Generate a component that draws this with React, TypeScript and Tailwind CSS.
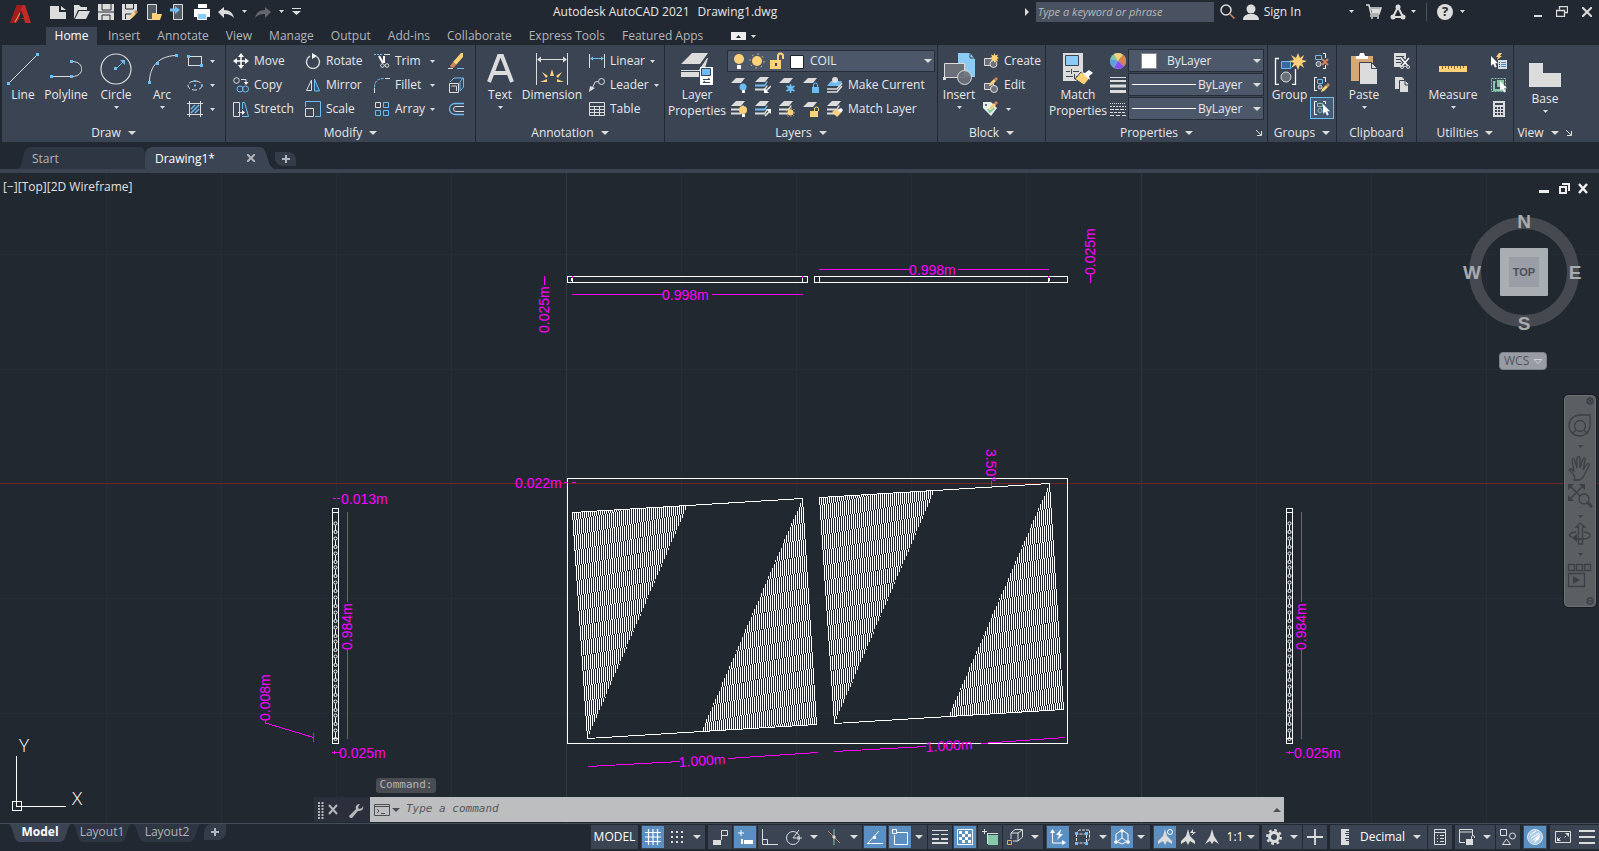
import type { ReactNode } from "react";
import clsx from "clsx";

const W = "#dcdcdc";
const B = "#6cbcf5";
const Y = "#ffd27a";
const O = "#d2835a";
const G = "#86c8a8";
const M = "#ff00ff";

interface IconProps {
  size?: number;
  children: ReactNode;
}

function Icon({ size = 16, children }: IconProps) {
  return (
    <svg width={size} height={size} viewBox={`0 0 ${size} ${size}`} fill="none" stroke={W} className="shrink-0" aria-hidden="true">
      {children}
    </svg>
  );
}

function Caret({ big = false }: { big?: boolean }) {
  return big ? (
    <svg width="8" height="4" viewBox="0 0 8 4" className="shrink-0" aria-hidden="true"><path d="M0 0h8L4 4z" fill={W} /></svg>
  ) : (
    <svg width="5" height="3" viewBox="0 0 5 3" className="shrink-0" aria-hidden="true"><path d="M0 0h5L2.500 3z" fill={W} /></svg>
  );
}

/* ---------- small shared drawings ---------- */

const sheets = (x = 0, y = 0, c2 = W) => (
  <g transform={`translate(${x} ${y})`} stroke="none">
    <path d="M5 0h9l-4 5H0z" fill={W} />
    <path d="M0 7.500h9.500l2-3h1.500l-3 5H0z" fill={c2} />
    <path d="M0 11.500h9.500l2-3h1.500l-3 5H0z" fill={W} />
  </g>
);
const sheet = <path d="M5 1h9l-4 5H0z" fill={W} stroke="none" />;
const pencil = (x: number, y: number) => (
  <g transform={`translate(${x} ${y})`} stroke="none">
    <path d="M0 9l1-3 4-4 2 2-4 4z" fill={Y} />
    <path d="M5 2l2-2 2 2-2 2z" fill={O} />
  </g>
);
const cursor = (x: number, y: number) => (
  <path transform={`translate(${x} ${y})`} d="M0 0v10l2.200-2.200L4 11.500l1.800-.8-1.600-3.500H7z" fill="#fff" stroke="none" />
);
const brush = (x: number, y: number) => (
  <g transform={`translate(${x} ${y})`} stroke="none">
    <path d="M0 3l4-3 5 4-4 4z" fill={Y} />
    <path d="M5 1l4-2 2 2-2 3z" fill="#fff" />
  </g>
);

const icons: Record<string, ReactNode> = {
  rect: <Icon><rect x="1.500" y="3.500" width="13" height="9" /><path d="M0 2h3v3H0zM13 11h3v3h-3z" fill={B} stroke="none" /></Icon>,
  ellipse: <Icon><ellipse cx="8" cy="8.500" rx="7" ry="4.500" strokeDasharray="5 2" /><path d="M7 3h2v2H7zM7 7.500h2v2H7zM14 7.500h2v2h-2z" fill={B} stroke="none" /></Icon>,
  hatch: <Icon><path d="M0 2.500h16M0 13.500h16M2.500 0v16M13.500 0v16" /><path d="M4 8l4-4M4 12l8-8M8 12l4-4" stroke={B} strokeWidth="1.500" /></Icon>,
  move: <Icon><path d="M8 2v12M2 8h12" stroke="#fff" strokeWidth="1.500" /><path d="M8 0l3 4H5zM8 16l3-4H5zM0 8l4-3v6zM16 8l-4-3v6z" fill="#fff" stroke="none" /></Icon>,
  copy: <Icon><circle cx="3.500" cy="3.500" r="2.800" /><path d="M8 2.500h5v3" /><path d="M11 5h4.500L13 8z" fill="#fff" stroke="none" /><circle cx="7" cy="12" r="3" stroke={B} /><circle cx="12.500" cy="12" r="3" stroke={B} /></Icon>,
  stretch: <Icon><path d="M.5 1.500h6v14h-6zM5 11.500h5" /><path d="M9 9l3 2.500L9 14z" fill="#fff" stroke="none" /><path d="M9.500 8V1.500h2l4 14H9" stroke={B} /></Icon>,
  rotate: <Icon><path d="M5 3.200A6.500 6.500 0 1 0 11.500 3.500" strokeWidth="1.400" /><path d="M7 0l5 3-5 3z" fill="#fff" stroke="none" /></Icon>,
  mirror: <Icon><path d="M6.500 3v10.500h-5z" /><path d="M9.500 2v12h5z" stroke={B} fill="#35597a" /></Icon>,
  scale: <Icon><path d="M.5 6V.5h15v15H10" stroke={B} /><path d="M.5 7.500h8v8h-8z" /></Icon>,
  trim: <Icon><path d="M0 1.500h8" stroke={B} strokeDasharray="2 1" /><path d="M10 1.500h6" /><path d="M5 3l4 7M10 3v7" stroke="#fff" strokeWidth="2" /><circle cx="8.500" cy="12.500" r="1.800" /><circle cx="13" cy="12.500" r="1.800" /></Icon>,
  fillet: <Icon><path d="M.5 10.500c0-6 3-9 9-9" stroke={B} strokeDasharray="3 1" /><path d="M11 1.500h5M.5 11v5" /></Icon>,
  array: <Icon><path d="M1.500 1.500h5v5h-5z" /><path d="M9.500 1.500h5v5h-5zM1.500 9.500h5v5h-5zM9.500 9.500h5v5h-5z" stroke={B} /></Icon>,
  erase: <Icon><path d="M0 15.500h5" /><path d="M9 15.500h7" stroke={B} /><path d="M15 0v4l-7 8-3-3 8-9z" fill={Y} stroke="none" /><path d="M5 9l3 3-2 2.500H3L2 13z" fill={O} stroke="none" /></Icon>,
  explode: <Icon><path d="M1.500 6.500h9v9h-9zM3.500 9h5v5" /><path d="M2 5l4-4h9.500v9l-3.500 4M12 5l3-4M12 5v8" stroke={B} /></Icon>,
  offset: <Icon><path d="M16 2.500H7a5.500 5.500 0 0 0 0 11h9" stroke={B} strokeWidth="1.300" /><path d="M16 5.500H8a2.500 2.500 0 0 0 0 5h8" /></Icon>,
  linear: <Icon><path d="M.5 1v14M15.500 1v14" /><path d="M3 5.500h10" stroke={B} /><path d="M1 5.500l3-2v4zM15 5.500l-3-2v4z" fill={B} stroke="none" /></Icon>,
  leader: <Icon><circle cx="12.500" cy="4.500" r="3" /><path d="M9.500 4.500L6 5l-3 7" /><path d="M0 15l1-6 5 2z" fill={W} stroke="none" /></Icon>,
  table: <Icon><path d="M.5 1.500h15v13H.5zM.5 5.500h15M.5 8.500h15M.5 11.500h15M5.500 5v10M10.500 5v10" /></Icon>,
  layOff: <Icon>{sheet}<circle cx="12" cy="10" r="3.500" fill={B} stroke="none" /><path d="M11 13h3v3h-3z" fill="#fff" stroke="none" /></Icon>,
  layIso: <Icon>{sheets(0, 0, B)}<path d="M16 9l-5 5" stroke="#fff" strokeWidth="1.500" /><path d="M9 16v-5l5 5z" fill="#fff" stroke="none" /></Icon>,
  layFrz: <Icon>{sheet}<path d="M11.500 7v9M7.500 9l8 5M15.500 9l-8 5" stroke={B} strokeWidth="1.500" /><circle cx="11.500" cy="11.500" r="2.500" stroke={B} /></Icon>,
  layLck: <Icon>{sheet}<path d="M9 10h7v6H9z" fill={B} stroke="none" /><path d="M10.500 10V8a2 2 0 0 1 4 0v2" stroke={B} /></Icon>,
  layCur: <Icon><path d="M4 4h11l-3 5H0z" fill={B} stroke="none" /><circle cx="8" cy="3" r="3" fill={W} stroke="none" /><path d="M0 12h10l5-6M0 15h10l5-6" strokeWidth="1.500" /></Icon>,
  layOn: <Icon>{sheets()}<circle cx="12" cy="9" r="4" fill={Y} stroke="none" /><path d="M11 13h3v3h-3z" fill="#fff" stroke="none" /></Icon>,
  layUniso: <Icon>{sheets(0, 0, B)}<path d="M10 15l5-5" stroke="#fff" strokeWidth="1.500" /><path d="M16 8v5l-5-5z" fill="#fff" stroke="none" /></Icon>,
  layThw: <Icon>{sheets()}<circle cx="11.500" cy="11.500" r="3" fill={Y} stroke="none" /><circle cx="11.500" cy="11.500" r="4.500" stroke={Y} strokeDasharray="1 2" /></Icon>,
  layUlk: <Icon>{sheet}<path d="M7 10h8v6H7z" fill={Y} stroke="none" /><path d="M11.500 10V8a2 2 0 0 1 4 0v2" stroke={Y} /></Icon>,
  layMatch: <Icon>{sheets()}{brush(5, 8)}</Icon>,
  blkCreate: <Icon><path d="M1.500 5.500h9v7h-9z" fill="#6b7078" /><circle cx="10.500" cy="11" r="3.500" fill="#6b7078" /><path d="M11.500 0l1 2.500L15 1.500 14 4l2 1-2 1 1 2.500-2.500-1L11.500 10l-1-2.500L8 8.500 9 6 7 5l2-1-1-2.500 2.500 1z" fill={Y} stroke="none" /></Icon>,
  blkEdit: <Icon><path d="M1.500 6.500h9v6h-9z" fill="#6b7078" /><circle cx="11" cy="12" r="3.500" fill="#6b7078" />{pencil(6, 0)}</Icon>,
  blkAttr: <Icon><path d="M0 1h8l6 6-6 8-8-8z" fill="#e4efe8" stroke="none" /><circle cx="3" cy="4" r="1" fill="#3b4453" stroke="none" /><path d="M5 8l2 3 4-4" stroke={G} strokeWidth="2" />{pencil(6, 0)}</Icon>,
  wheel: <Icon><circle cx="8" cy="8" r="8" fill={G} stroke="none" /><path d="M8 8V0a8 8 0 0 1 5 2z" fill={Y} stroke="none" /><path d="M8 8l5-6.500a8 8 0 0 1 1 12z" fill={O} stroke="none" /><path d="M8 8l6 5.500a8 8 0 0 1-10 1z" fill="#8a4dff" stroke="none" /><path d="M8 8L3 14.200A8 8 0 0 1 .3 6z" fill="#5d9fe0" stroke="none" /><path d="M8 8L4 1a8 8 0 0 1 4-1z" fill={Y} stroke="none" /></Icon>,
  lweight: <Icon><path d="M0 .5h16" /><path d="M0 4h16" strokeWidth="2" /><path d="M0 9h16" strokeWidth="3" /><path d="M0 14.500h16" strokeWidth="3" /></Icon>,
  ltype: <Icon><path d="M0 2.500h16" strokeDasharray="1 1" /><path d="M0 5.500h16" strokeDasharray="2 1" /><path d="M0 8.500h16" strokeDasharray="4 1" /><path d="M0 11.500h16" strokeDasharray="3 1" /><path d="M0 14.500h16" strokeDasharray="4 2" /></Icon>,
  ungroup: <Icon><path d="M1.500 2.500h6v4h-6z" stroke={B} /><circle cx="4.500" cy="11" r="2.500" fill="#6b7078" /><path d="M9 .5h2.500V5M9 15.500h2.500V12" stroke="#fff" /><path d="M8 6l6 6M14 6l-6 6" stroke={O} strokeWidth="2" /></Icon>,
  groupEdit: <Icon><path d="M3 .5H.5v13H3M9 .5h2.500V5" stroke="#fff" /><path d="M3.500 2.500h5v4h-5z" stroke={B} /><circle cx="6" cy="10" r="2" fill="#6b7078" />{pencil(7, 6)}</Icon>,
  groupSel: <Icon><path d="M3 1.500H.5v13H3M9 1.500h2.500V4" stroke="#fff" /><path d="M3.500 3.500h5v3h-5z" stroke={G} /><circle cx="6" cy="10.500" r="2" stroke={G} />{cursor(9, 4)}</Icon>,
  cut: <Icon><path d="M0 0h12v14H0z" fill={W} stroke="none" /><path d="M2 3.500h8M2 6.500h5M2 9.500h5" stroke="#3b4453" /><path d="M7 5l7 8M15 5l-7 8" stroke="#3b4453" strokeWidth="4" /><path d="M7 5l7 8M15 5l-7 8" stroke="#fff" strokeWidth="1.500" /><circle cx="8" cy="14" r="1.500" /><circle cx="14" cy="14" r="1.500" /></Icon>,
  copyClip: <Icon><path d="M1 0h7l2 2v10H1z" fill={W} stroke="none" /><path d="M5.500 3.500h6l3 3v9h-9z" fill={W} stroke="#3b4453" /><path d="M11 4v4h4" stroke="#3b4453" /></Icon>,
  qselect: <Icon>{cursor(0, 3)}<path d="M7 7h9v9H7z" fill={W} stroke="none" /><path d="M8 9.500h1M8 11.500h1M8 13.500h1" stroke="#445" /><path d="M10 9.500h5M10 11.500h5M10 13.500h5" stroke="#3c8bd0" /><path d="M8 0h3L9 3h2L6 7l1-3H5z" fill={Y} stroke="none" /></Icon>,
  selAll: <Icon><path d="M.5 1.500h14v13H.5z" stroke={G} strokeDasharray="2 1" /><path d="M6 3h7v7H6z" fill={G} stroke="none" /><path d="M4.500 5H3v8h8v-2" stroke={G} strokeWidth="2" />{cursor(9, 4)}</Icon>,
  calc: <Icon><path d="M2 0h12v16H2z" fill={W} stroke="none" /><path d="M4 2h8v2H4z" fill="#3b4453" stroke="none" /><path d="M4 7h8M4 10h8M4 13h8" stroke="#3b4453" strokeWidth="2" strokeDasharray="2 1" /></Icon>,
};

/* ---------- ribbon parts ---------- */

function Big({ label, icon, width, arrow = false }: { label: string[]; icon: ReactNode; width: string; arrow?: boolean }) {
  return (
    <button type="button" className={clsx("flex h-[74px] shrink-0 flex-col items-center", width)}>
      <span className="flex h-9 items-center pt-1">{icon}</span>
      <span className="mt-0.5 block text-center leading-4 whitespace-nowrap">
        {label.map((l) => <span key={l} className="block">{l}</span>)}
      </span>
      {arrow && <span className="flex h-2 items-center"><Caret /></span>}
    </button>
  );
}

function Small({ icon, label, arrow = false, width }: { icon: string; label?: string; arrow?: boolean; width?: string }) {
  return (
    <button type="button" aria-label={label ?? icon} className={clsx("flex h-6 shrink-0 items-center gap-[5px] whitespace-nowrap", width)}>
      {icons[icon]}
      {label && <span>{label}</span>}
      {arrow && <span className="ml-auto"><Caret /></span>}
    </button>
  );
}

function Panel({ title, width, children, arrow = true, launch, pad = "pl-[7px]" }: {
  title: string; width: string; children: ReactNode; arrow?: boolean; launch?: "corner" | "inline"; pad?: string;
}) {
  return (
    <section className={clsx("flex h-[97px] flex-col bg-[#3b4453] pt-1", width)}>
      <div className={clsx("flex h-[74px]", pad)}>{children}</div>
      <div className="relative flex h-[19px] items-center justify-center gap-[7px]">
        <h2>{title}</h2>
        {arrow && <Caret big />}
        {launch && (
          <svg width="6" height="6" viewBox="0 0 6 6" className={clsx("shrink-0", launch === "corner" && "absolute top-[7px] right-[5px]")} stroke={W} fill="none" aria-hidden="true"><path d="M0 0l5 5M5.500 1v4.500H1" /></svg>
        )}
      </div>
    </section>
  );
}

function Pick({ label, value, children, height }: { label: string; value: string; children: ReactNode; height: string }) {
  return (
    <div className={clsx("flex items-center border border-[#272d38] bg-[#4c586a] pr-[2px]", height)}>
      {children}
      <select aria-label={label} className="min-w-0 flex-1 appearance-none bg-transparent outline-none">
        <option>{value}</option>
      </select>
      <Caret big />
    </div>
  );
}

function Ribbon() {
  return (
    <div className="flex gap-px bg-[#222831] pl-[2px]">
      <Panel title="Draw" width="w-[223px]" pad="pl-px">
        <Big label={["Line"]} width="w-10" icon={<Icon size={32}><path d="M2 30L30 2" /><path d="M0 29h3v3H0zM29 0h3v3h-3z" fill={B} stroke="none" /></Icon>} />
        <Big label={["Polyline"]} width="w-[46px]" icon={<Icon size={32}><path d="M2 23.500h20M22 8.500c13 0 13 15 0 15" /><path d="M0 22h3v3H0zM20 22h3v3h-3zM20 7h3v3h-3z" fill={B} stroke="none" /></Icon>} />
        <Big arrow label={["Circle"]} width="w-[54px]" icon={<Icon size={32}><circle cx="16" cy="16" r="15" strokeWidth="1.200" /><path d="M16 16l7-7" stroke={B} /><path d="M25 7v5l-5-5zM14 14h3v3h-3z" fill={B} stroke="none" /></Icon>} />
        <Big arrow label={["Arc"]} width="w-[38px]" icon={<Icon size={32}><path d="M3.500 29C3.500 13 13 3.500 29 2.500" /><path d="M2 28h3v3H2zM10 9h3v3h-3zM29 1h3v3h-3z" fill={B} stroke="none" /></Icon>} />
        <div className="ml-[6px]">
          <Small icon="rect" arrow width="w-[28px]" />
          <Small icon="ellipse" arrow width="w-[28px]" />
          <Small icon="hatch" arrow width="w-[28px]" />
        </div>
      </Panel>
      <Panel title="Modify" width="w-[249px]">
        <div className="w-[72px]"><Small icon="move" label="Move" /><Small icon="copy" label="Copy" /><Small icon="stretch" label="Stretch" /></div>
        <div className="w-[69px]"><Small icon="rotate" label="Rotate" /><Small icon="mirror" label="Mirror" /><Small icon="scale" label="Scale" /></div>
        <div className="w-[74px]">
          <Small icon="trim" label="Trim" arrow width="w-[61px]" /><Small icon="fillet" label="Fillet" arrow width="w-[61px]" /><Small icon="array" label="Array" arrow width="w-[61px]" />
        </div>
        <div><Small icon="erase" /><Small icon="explode" /><Small icon="offset" /></div>
      </Panel>
      <Panel title="Annotation" width="w-[188px]" pad="pl-px">
        <Big arrow label={["Text"]} width="w-[46px]" icon={<Icon size={32}><path d="M5 29L15 3h3l10 26M9 20h15" strokeWidth="4" /></Icon>} />
        <Big label={["Dimension"]} width="w-[58px]" icon={<Icon size={32}><path d="M.5 0v32M31.500 0v32M2 6.500h28" /><path d="M1 6.500l4-3v6zM31 6.500l-4-3v6z" fill={W} stroke="none" /><path d="M16 16l2 7h-4zM6 19l6 4-2 2zM26 19l-6 4 2 2zM4 29l7-3v3zM28 29l-7-3v3z" fill={Y} stroke="none" /></Icon>} />
        <div className="ml-2">
          <Small icon="linear" label="Linear" arrow width="w-[66px]" /><Small icon="leader" label="Leader" arrow width="w-[69px]" /><Small icon="table" label="Table" />
        </div>
      </Panel>
      <Panel title="Layers" width="w-[272px]" pad="pl-[2px]">
        <Big label={["Layer", "Properties"]} width="w-[60px]" icon={<Icon size={32}><path d="M11 0h16l-8 11H0zM0 17h18l8-12h1l-3 10-5 3H0zM0 24h18v-5H0z" fill={W} stroke="none" /><path d="M19 14h13v18H19z" fill="#fff" stroke="none" /><path d="M20.500 15.500h9v7h-9z" fill={B} stroke="#3b4453" /><path d="M22 26.500h7M22 29.500h7M27 25l2 1.500M24 28l-2 1.500" stroke="#3b4453" /></Icon>} />
        <div className="w-[208px]">
          <Pick label="Layer" value="COIL" height="mt-px h-[22px] mb-px">
            <svg width="78" height="20" viewBox="0 0 78 20" fill="none" className="mr-1 shrink-0" aria-hidden="true">
              <circle cx="11" cy="8" r="5" fill={Y} /><path d="M9 14h4v4H9z" fill="#fff" />
              <circle cx="29" cy="10" r="5" fill={Y} /><circle cx="29" cy="10" r="7" stroke={Y} strokeDasharray="1.500 4" />
              <path d="M42 9h11v9H42z" fill={Y} /><path d="M50 9V5a2.500 2.500 0 0 1 5 0v3" stroke={Y} strokeWidth="2" /><path d="M47 12h2v3h-2z" fill="#3b4453" />
              <path d="M62.500 4.500h13v13h-13z" fill="#fff" stroke="#222" />
            </svg>
          </Pick>
          <div className="flex gap-2 pl-1"><Small icon="layOff" /><Small icon="layIso" /><Small icon="layFrz" /><Small icon="layLck" /><Small icon="layCur" label="Make Current" /></div>
          <div className="flex gap-2 pl-1"><Small icon="layOn" /><Small icon="layUniso" /><Small icon="layThw" /><Small icon="layUlk" /><Small icon="layMatch" label="Match Layer" /></div>
        </div>
      </Panel>
      <Panel title="Block" width="w-[107px]" pad="pl-px">
        <Big arrow label={["Insert"]} width="w-10" icon={<Icon size={32}><path d="M15 0h12l5 6v18H15z" fill="#8accf6" stroke="none" /><path d="M27 0v5h5" stroke="#3b4453" /><path d="M1.500 10.500h20v14h-20z" fill="#6b7078" /><circle cx="21.500" cy="24.500" r="7" fill="#6b7078" fillOpacity=".9" /><path d="M0 24h3v3H0z" fill={W} stroke="none" /></Icon>} />
        <div className="ml-1"><Small icon="blkCreate" label="Create" /><Small icon="blkEdit" label="Edit" /><Small icon="blkAttr" arrow width="w-[28px]" /></div>
      </Panel>
      <Panel title="Properties" width="w-[221px]" pad="pl-[2px]" launch="corner">
        <Big label={["Match", "Properties"]} width="w-[60px]" icon={<Icon size={32}><path d="M1 0h20v28H1z" fill={W} stroke="none" /><path d="M3.500 2.500h13v10h-13z" fill="#8accf6" stroke="#3b4453" /><path d="M4 18.500h4M11 18.500h6M4 23.500h7M14 23.500h3M9.500 16v5M12.500 21v5" stroke="#3b4453" /><path d="M13 26l6-7 9 6-6 7z" fill={Y} stroke="#3b4453" /><path d="M19 19l4 1 4-3 4 3-4 3 1 4z" fill="#fff" stroke="none" /></Icon>} />
        <div className="w-5 pl-[2px]"><Small icon="wheel" /><Small icon="lweight" /><Small icon="ltype" /></div>
        <div className="flex w-[136px] flex-col gap-px">
          <Pick label="Object color" value="ByLayer" height="h-[23px]"><span className="mr-[10px] ml-3 size-4 border border-[#888] bg-white" /></Pick>
          <Pick label="Lineweight" value="ByLayer" height="h-[23px]"><span className="mr-[2px] ml-[3px] h-px w-16 bg-white" /></Pick>
          <Pick label="Linetype" value="ByLayer" height="h-[23px]"><span className="mr-[2px] ml-[3px] h-px w-16 bg-white" /></Pick>
        </div>
      </Panel>
      <Panel title="Groups" width="w-[68px]" pad="pl-px">
        <Big label={["Group"]} width="w-[41px]" icon={<Icon size={32}><path d="M5 5.500H1.500v26H5M18 31.500h3.500V16" stroke="#fff" strokeWidth="1.300" /><path d="M7.500 8.500h9v7h-9z" fill="#42669c" stroke={B} /><circle cx="12" cy="24" r="5" fill="#6b7078" /><path d="M24 0l2 5 4-3-2 5 5 1-5 2 2 5-4-3-2 5-2-5-5 3 3-5-5-2 5-1-3-5 5 3z" fill={Y} stroke="none" /></Icon>} />
        <div className="flex flex-col items-center">
          <Small icon="ungroup" /><Small icon="groupEdit" />
          <span className="flex h-[22px] w-6 items-center justify-center border border-[#6cbcf5] bg-[#455a75]"><Small icon="groupSel" /></span>
        </div>
      </Panel>
      <Panel title="Clipboard" width="w-[79px]" arrow={false} pad="pl-px">
        <Big arrow label={["Paste"]} width="w-[52px]" icon={<Icon size={32}><path d="M3 3h22v25H3z" fill="#d8a873" stroke="none" /><path d="M8 3h3l1-3h4l1 3h3v3H8z" fill="#fff" stroke="none" /><path d="M11.500 9.500h12l6 6v16h-18z" fill={W} stroke="#3b4453" /><path d="M23.500 9.500v6h6" stroke="#3b4453" /></Icon>} />
        <div className="ml-1"><Small icon="cut" /><Small icon="copyClip" /></div>
      </Panel>
      <Panel title="Utilities" width="w-24" pad="pl-[2px]">
        <Big arrow label={["Measure"]} width="w-[68px]" icon={<Icon size={32}><path d="M2 13h28v6H2z" fill={Y} stroke="none" /><path d="M5.500 13v3M8.500 13v2M11.500 13v3M14.500 13v2M17.500 13v3M20.500 13v2M23.500 13v3M26.500 13v2" stroke="#8b6d2d" /></Icon>} />
        <div className="ml-1"><Small icon="qselect" /><Small icon="selAll" /><Small icon="calc" /></div>
      </Panel>
      <Panel title="View" width="min-w-0 flex-1 pr-6" pad="pl-[7px] pt-1" launch="inline">
        <Big arrow label={["Base"]} width="w-12" icon={<Icon size={32}><path d="M0 6h14v10h18v14H0z" fill={W} stroke="none" /></Icon>} />
      </Panel>
    </div>
  );
}

/* ---------- title bar ---------- */

function TitleBar() {
  return (
    <header className="flex h-[27px] items-center pb-1">
      <div className="flex w-[553px] shrink-0 items-center pl-[10px]">
        <svg width="22" height="20" viewBox="0 0 22 20" className="mt-1 mr-[18px]" aria-hidden="true"><path d="M7 1h8l6 18h-6l-1-4H9l-3 4H0z" fill="#c22a26" /><path d="M11 6l3 8-5 1z" fill="#222831" /><path d="M13 1l-9 18H0L7 1z" fill="#a31d1f" /><path d="M5 18l5-9" stroke="#e0a060" /></svg>
        <div className="flex items-center gap-2">
          <Icon><path d="M0 2h9v6h7v7H0z" fill={W} stroke="none" /><path d="M11 2l5 4h-5z" fill={W} stroke="none" /></Icon>
          <Icon><path d="M0 15V1h5l2 2h6v3H4z" fill={W} stroke="none" /><path d="M5 7h11l-4 8H1z" fill={W} stroke="none" /></Icon>
          <Icon><path d="M0 0h16v16H0z" fill={W} stroke="none" /><path d="M4 0v6h9V0M4 16v-5h8v5M0 8h16" stroke="#222831" /></Icon>
          <Icon><path d="M0 0h15v8l-7 8H0z" fill={W} stroke="none" /><path d="M3.500 0v5h8V0M3.500 15v-5h6" stroke="#222831" />{pencil(7, 6)}</Icon>
          <Icon><path d="M1.500.5h9v15h-9z" fill="#555b63" /><path d="M6 9h4l1 1h5l-2 6H6z" fill={Y} stroke="none" /></Icon>
          <Icon><path d="M3.500.5h9v15h-9z" fill="#555b63" /><path d="M0 6h6" stroke={B} strokeWidth="3" /><path d="M5 2l5 4-5 4z" fill={B} stroke="none" /></Icon>
          <Icon><path d="M4 0h9v4H4zM0 5h16v8H0z" fill="#fff" stroke="none" /><path d="M3.500 9.500h9v6h-9z" fill="#8accf6" stroke="#fff" /></Icon>
          <Icon><path d="M0 8l6-5v3c6 0 9 3 10 8-3-3-5-4-10-4v4z" fill={W} stroke="none" /></Icon>
          <Caret />
          <span className="flex opacity-35"><Icon><path d="M16 8l-6-5v3C4 6 1 9 0 14c3-3 5-4 10-4v4z" fill={W} stroke="none" /></Icon></span>
          <Caret />
          <svg width="9" height="7" viewBox="0 0 9 7" aria-hidden="true"><path d="M0 0h9v1H0zM0 3h9L4.500 7z" fill={W} /></svg>
        </div>
      </div>
      <h1 className="flex gap-2 whitespace-nowrap text-[#e6e6e6]"><span>Autodesk AutoCAD 2021</span><span>Drawing1.dwg</span></h1>
      <div className="ml-auto flex shrink-0 items-center">
        <svg width="4" height="8" viewBox="0 0 4 8" className="mr-[7px]" aria-hidden="true"><path d="M0 0l4 4-4 4z" fill={W} /></svg>
        <input aria-label="Search" placeholder="Type a keyword or phrase" className="h-5 w-[178px] bg-[#4a5262] px-[2px] text-[11px] italic outline-none placeholder:text-[#b4b8be]" />
        <span className="ml-[6px] flex"><Icon><circle cx="6" cy="6" r="5" strokeWidth="1.500" /><path d="M9.500 9.500l5 5" stroke={O} strokeWidth="1.500" /></Icon></span>
        <button type="button" className="ml-[7px] flex items-center gap-[5px] whitespace-nowrap">
          <Icon><circle cx="8" cy="5" r="4.500" fill={W} stroke="none" /><path d="M0 16c0-5 4-5 5-6h6c1 1 5 1 5 6z" fill={W} stroke="none" /></Icon>Sign In
        </button>
        <div className="ml-[48px] flex items-center">
          <Caret />
          <span className="ml-3 flex"><Icon><path d="M0 1h3l2 9h8l2-6H4" strokeWidth="1.500" /><path d="M5 5h9l-1 4H6z" fill={W} stroke="none" /><path d="M4 12h9M5 14h2M11 14h2" strokeWidth="1.500" /></Icon></span>
          <span className="ml-2 flex"><Icon><path d="M8 3L3 13h10z" strokeWidth="2" /><circle cx="8" cy="3" r="2.500" fill={W} stroke="none" /><circle cx="3" cy="13" r="2.500" fill={W} stroke="none" /><circle cx="13" cy="13" r="2.500" fill={W} stroke="none" /></Icon></span>
          <span className="ml-[5px]"><Caret /></span>
          <span className="mx-[10px] h-[18px] w-px bg-[#4a5262]" />
          <span className="flex size-4 items-center justify-center rounded-full bg-[#dcdcdc] text-[13px] font-bold text-[#222831]">?</span>
          <span className="ml-[7px]"><Caret /></span>
        </div>
        <div className="mr-[7px] ml-[69px] flex items-center gap-[14px]">
          <svg width="8" height="10" viewBox="0 0 8 10" aria-hidden="true"><path d="M0 8h8v2H0z" fill={W} /></svg>
          <svg width="12" height="11" viewBox="0 0 12 11" fill="none" stroke={W} aria-hidden="true"><path d="M3.500 3.500v-3h8v6h-3M.5 4.500h8v6h-8z" strokeWidth="1.300" /></svg>
          <svg width="10" height="10" viewBox="0 0 10 10" stroke={W} strokeWidth="2" aria-hidden="true"><path d="M0 0l10 10M10 0L0 10" /></svg>
        </div>
      </div>
    </header>
  );
}

const menu = ["Insert", "Annotate", "View", "Manage", "Output", "Add-ins", "Collaborate", "Express Tools", "Featured Apps"];

function MenuTabs() {
  return (
    <nav className="flex h-[18px] items-center pl-[46px] text-[#b2b5ba]">
      <a href="#home" className="mr-[11px] flex h-[18px] w-[51px] items-center justify-center bg-[#3b4453] pb-px text-white">Home</a>
      <div className="flex gap-[17px] pb-px">
        {menu.map((m) => <a key={m} href={`#${m}`} className="whitespace-nowrap">{m}</a>)}
      </div>
      <span className="ml-7 flex h-2 w-[15px] items-center justify-center bg-[#eee]"><svg width="5" height="3" viewBox="0 0 5 3" aria-hidden="true"><path d="M0 3h5L2.500 0z" fill="#222831" /></svg></span>
      <span className="ml-[5px]"><Caret /></span>
    </nav>
  );
}

function FileTabs() {
  return (
    <div className="flex h-[31px] border-b-4 border-[#3b4453] pt-[5px] pl-[18px] leading-[17px]">
      <a href="#start" className="relative block w-[127px] pt-[3px] pl-[14px] text-[#b2b5ba]">
        <svg className="absolute inset-0 h-full w-full" viewBox="0 0 127 22" preserveAspectRatio="none" aria-hidden="true"><path d="M0 22C6 20 3 0 13 0h107c6 0 7 4 7 10v12z" fill="#2e3643" /></svg>
        <span className="relative">Start</span>
      </a>
      <a href="#drawing" className="relative flex w-[130px] items-center pl-[10px] text-white">
        <svg className="absolute inset-0 h-full w-full" viewBox="0 0 130 22" preserveAspectRatio="none" aria-hidden="true"><path d="M0 22V10C0 4 2 0 8 0h106c10 0 7 20 16 22z" fill="#3b4453" /></svg>
        <span className="relative">Drawing1*</span>
        <svg width="8" height="8" viewBox="0 0 8 8" className="relative mr-5 ml-auto" stroke="#b2b5ba" strokeWidth="2" aria-hidden="true"><path d="M0 0l8 8M8 0L0 8" /></svg>
      </a>
      <button type="button" aria-label="New tab" className="mt-[5px] flex h-[14px] w-[21px] items-center justify-center rounded-tr-lg rounded-bl-lg bg-[#343c49]">
        <svg width="8" height="8" viewBox="0 0 8 8" stroke="#b2b5ba" strokeWidth="2" aria-hidden="true"><path d="M4 0v8M0 4h8" /></svg>
      </button>
    </div>
  );
}

/* ---------- drawing ---------- */

type Pt = [number, number];
const mix = (a: Pt, b: Pt, t: number): Pt => [a[0] + (b[0] - a[0]) * t, a[1] + (b[1] - a[1]) * t];

// parallel strokes from edge a-apex to edge b-apex
function hatch(a: Pt, b: Pt, apex: Pt, n: number) {
  let d = "";
  for (let i = 0; i <= n; i++) {
    const p = mix(a, apex, i / n);
    const q = mix(b, apex, i / n);
    d += `M${p[0].toFixed(2)} ${p[1].toFixed(2)}L${q[0].toFixed(2)} ${q[1].toFixed(2)}`;
  }
  return d;
}

const leaf =
  "M572.500 512.500L802.500 498.500L816.500 724.500L587.500 738.500Z" +
  hatch([572.5, 512.5], [587.5, 738.5], [687.5, 505.5], 57) +
  hatch([802.5, 498.5], [816.5, 724.5], [701.5, 731.5], 57);

const dims: { t: string; x: number; y: number; r?: number }[] = [
  { t: "0.998m", x: 662, y: 300 },
  { t: "0.998m", x: 909, y: 275 },
  { t: "0.025m", x: 549, y: 333, r: -90 },
  { t: "0.025m", x: 1095, y: 275, r: -90 },
  { t: "0.022m", x: 515, y: 488 },
  { t: "0.013m", x: 341, y: 504 },
  { t: "0.984m", x: 352, y: 650, r: -90 },
  { t: "0.984m", x: 1306, y: 650, r: -90 },
  { t: "0.025m", x: 339, y: 758 },
  { t: "0.025m", x: 1294, y: 758 },
  { t: "0.008m", x: 270, y: 721, r: -90 },
  { t: "3.50°", x: 986, y: 449, r: 90 },
  { t: "1.000m", x: 679, y: 767, r: -3.5 },
  { t: "1.000m", x: 926, y: 752, r: -3.5 },
];

function SideBar({ x }: { x: number }) {
  return (
    <g>
      <path d={`M${x} 508.500h6v235h-6zM${x} 512.500h6M${x} 738.500h6`} />
      {Array.from({ length: 15 }, (_, i) => {
        const y = Math.round(523 + i * 14.8) + 0.5;
        return (
          <g key={i} shapeRendering="auto">
            <circle cx={x + 3} cy={y} r="1.600" />
            <path d={`M${x + 3} ${y + 2}v5`} />
            <circle cx={x + 3} cy={y + 8.5} r="1.600" />
          </g>
        );
      })}
    </g>
  );
}

function Drawing() {
  const vs = [106, 221, 336, 451, 681, 796, 911, 1026, 1256, 1371, 1486];
  return (
    <svg className="absolute inset-0 h-full w-full" fill="none" stroke="#fff" shapeRendering="crispEdges" role="img" aria-label="Drawing1">
      <g transform="translate(0 -173)">
        <path d={vs.map((v) => `M${v}.5 173V2000`).join("") + "M0 254.500H4000M0 369.500H4000M0 598.500H4000M0 713.500H4000"} stroke="#262d38" />
        <path d="M566.500 173V2000M1141.500 173V2000" stroke="#303846" />
        <path d="M0 483.500H4000" stroke="#702529" />
        <path d="M567.500 478.500h500v265h-500z" />
        <path d={leaf} />
        <path d={leaf} transform="translate(247 -15)" />
        <path d="M567.500 276.500h240v6h-240zM814.500 276.500h253v6h-253zM572.500 277v5M571.500 278v3M802.500 277v5M819.500 277v5M1048.500 277v5M1049.500 278v3" />
        <SideBar x={332.5} />
        <SideBar x={1286.5} />
        <g stroke={M}>
          <path d="M572 294.500h91M712 294.500h91M819 269.500h91M958 269.500h91M544.500 276v9M1090.500 275v8M564 482.500h4M572 482.500h4" />
          <path d="M333 498.500h3M337 498.500h3M347.500 512v90M347.500 650v89M1301.500 512v90M1301.500 650v89M332 752.500h8M1286 752.500h8M334.500 751v3M1289.500 751v3M572.500 276v2M802.500 276v2M1048.500 276v2" />
          <path d="M265.500 720v3L313.500 737.500M313.500 733v9M991.500 481v6" />
          <path d="M588 766.500L680 761.500M728 758.500L818 752.500M834 751.500L926 746.500M981 743.500L1065 737.500" />
        </g>
        <g fill={M} stroke="none" fontFamily="Liberation Sans, sans-serif" fontSize="14">
          {dims.map((d, i) => (
            <text key={i} transform={`translate(${d.x} ${d.y}) rotate(${d.r ?? 0})`}>{d.t}</text>
          ))}
        </g>
      </g>
    </svg>
  );
}

function Ucs() {
  return (
    <svg width="90" height="96" viewBox="0 -16 90 96" className="absolute bottom-2 left-[10px]" fill="none" stroke="#fff" aria-hidden="true">
      <path d="M2.500 66.500h9v9h-9zM6.500 21v50H56" shapeRendering="crispEdges" />
      <g fill="#fff" stroke="none" fontSize="19" fontFamily="Open Sans, sans-serif" fontWeight="300" textAnchor="middle">
        <text x="14" y="17">Y</text>
        <text x="67" y="70">X</text>
      </g>
    </svg>
  );
}

function ViewCube() {
  return (
    <svg width="134" height="136" viewBox="-2 -8 134 136" className="absolute top-[31px] right-2" aria-hidden="true">
      <circle cx="65" cy="60" r="49" fill="none" stroke="#464a50" strokeWidth="12" />
      <rect x="41" y="36" width="48" height="48" rx="1" fill="#a9aeb2" />
      <rect x="50" y="45" width="30" height="30" fill="#9a9ea6" />
      <g textAnchor="middle" fontFamily="Liberation Sans, sans-serif" fontWeight="700">
        <text x="65" y="64" fontSize="11" fill="#4b4f59">TOP</text>
        <g fontSize="19" fill="#a8abb0">
          <text x="65" y="16">N</text><text x="65" y="118">S</text><text x="13" y="67">W</text><text x="116" y="67">E</text>
        </g>
      </g>
    </svg>
  );
}

function NavBar() {
  return (
    <div className="absolute top-[222px] right-[3px] rounded-[4px] border border-[#6d7174] bg-[#5b5f62] outline-1 outline-[#171b22]">
      <svg width="30" height="210" viewBox="0 0 30 210" fill="none" stroke="#3c4044" strokeWidth="1.300" aria-hidden="true">
        <circle cx="25" cy="5" r="3" /><path d="M23 3l4 4M27 3l-4 4" />
        <path d="M15 19h10v11a10.500 10.500 0 1 1-10-11z" /><circle cx="15" cy="30" r="5.500" /><path d="M11 34l-4 4M19 34l4 4" />
        <path d="M13 49h5l-2.500 3zM13 119h5l-2.500 3zM13 157h5l-2.500 3z" fill="#3c4044" stroke="none" />
        <path d="M10 81c-2-4-4-5-6-7 1-2 3-1 5 2L7 64c1-2 3-1 3 1l2 7V62c1-2 3-2 3 0v10l3-9c1-2 3-1 2 1l-2 10 4-6c1-1 3 0 2 2l-6 11-3 3h-6z" />
        <path d="M5 90l13 13M18 90L5 103" strokeWidth="1.500" /><path d="M3 88h6l-6 6zM20 88h-6l6 6zM3 105h6l-6-6z" fill="#3c4044" stroke="none" />
        <circle cx="19" cy="103" r="5" fill="#5b5f62" /><path d="M23 107l4 4" strokeWidth="3" />
        <path d="M15 127l-4 4h2.500v17h4v-17H20z" /><path d="M19 136c8 1 8 6 0 7h-8M11 136c-8 1-8 4-4 5" /><path d="M7 142l5-4v8z" fill="#3c4044" stroke="none" />
        <path d="M3.500 168.500h6v6h-6zM11.500 168.500h6v6h-6zM19.500 168.500h6v6h-6zM3.500 177.500h16v13h-16z" /><path d="M8 180l7 4-7 4z" fill="#3c4044" stroke="none" />
        <circle cx="25" cy="205" r="3" /><path d="M23 205h4" />
      </svg>
    </div>
  );
}

function CommandLine() {
  return (
    <div className="absolute right-[315px] bottom-px left-[314px] font-['DejaVu_Sans_Mono',monospace] text-[11px]">
      <p className="mb-1 ml-[62px] flex h-[15px] w-[60px] items-center justify-center rounded-[3px] bg-[#494d53] text-[#b4b4b4]">Command:</p>
      <div className="flex h-[25px]">
        <div className="flex w-14 shrink-0 items-center bg-[#2a2f3b] pl-1">
          <svg width="50" height="18" viewBox="0 0 50 18" fill="none" aria-hidden="true">
            <path d="M1 1v17M4.500 1v17" stroke="#b4b6ba" strokeWidth="2" strokeDasharray="2 1" />
            <path d="M11 4l8 9M19 4l-8 9" stroke="#b4b6ba" strokeWidth="2" />
            <path d="M32 17l-1-2 7-7c-1-3 1-5 4-5l-2 3 1 2 3-1 1-2c1 3-1 5-5 5l-6 7z" fill="#b4b6ba" />
          </svg>
        </div>
        <div className="flex min-w-0 flex-1 items-center bg-[#bdbebf] pr-[3px] pl-1">
          <svg width="16" height="12" viewBox="0 0 16 12" fill="none" stroke="#4b4f55" aria-hidden="true"><path d="M.5.5h15v11H.5zM.5 2.500h15M3 5l2 2-2 2M7 9.500h4" /></svg>
          <svg width="8" height="4" viewBox="0 0 8 4" className="mx-[2px]" aria-hidden="true"><path d="M0 0h8L4 4z" fill="#4b4f55" /></svg>
          <input aria-label="Command" placeholder="Type a command" className="ml-1 min-w-0 flex-1 bg-transparent italic outline-none placeholder:text-[#54585e]" />
          <svg width="8" height="4" viewBox="0 0 8 4" aria-hidden="true"><path d="M0 4h8L4 0z" fill="#4b4f55" /></svg>
        </div>
      </div>
    </div>
  );
}

function Canvas() {
  return (
    <main className="relative min-h-[500px] flex-1 overflow-hidden bg-[#212830]">
      <Drawing />
      <p className="absolute top-[6px] left-[3px] text-[#e0e0e0]">[−][Top][2D Wireframe]</p>
      <Ucs />
      <svg width="50" height="11" viewBox="0 0 50 11" className="absolute top-[10px] right-[10px]" fill="none" stroke="#eee" strokeWidth="2" aria-hidden="true">
        <path d="M0 8.500h10" strokeWidth="3" /><path d="M21 4h6v6h-6zM23 1h7v7" /><path d="M40 1l8 9M48 1l-8 9" strokeWidth="2.500" />
      </svg>
      <ViewCube />
      <button type="button" className="absolute top-[179px] right-[52px] flex h-[18px] w-12 items-center justify-between rounded-[4px] border border-[#7d8188] bg-[#999ca4] px-1 text-[#50545e]">
        WCS<svg width="8" height="5" viewBox="0 0 8 5" fill="none" stroke="#d0d2d6" aria-hidden="true"><path d="M0 .5h8L4 4.500z" /></svg>
      </button>
      <NavBar />
      <CommandLine />
    </main>
  );
}

/* ---------- status bar ---------- */

function Cell({ w, children, on = false }: { w: string; children: ReactNode; on?: boolean }) {
  return <button type="button" className={clsx("flex h-[22px] shrink-0 items-center justify-center", w, on && "bg-[#5c8fc1]")}>{children}</button>;
}

function Group({ w, children, gap = "ml-px" }: { w: string; children: ReactNode; gap?: string }) {
  return <div className={clsx("flex h-6 shrink-0 items-center justify-center bg-[#3b4453]", w, gap)}>{children}</div>;
}

function LayoutTab({ label, active = false, w }: { label: string; active?: boolean; w: string }) {
  return (
    <a href={`#${label}`} className={clsx("relative block h-[18px] text-center leading-4", w, active ? "font-bold text-white" : "text-[#b2b5ba]")}>
      <svg className="absolute inset-0 h-full w-full" viewBox="0 0 64 18" preserveAspectRatio="none" aria-hidden="true"><path d="M0 0c6 0 4 18 12 18h40c8 0 6-18 12-18z" fill={active ? "#3b4453" : "#2e3643"} /></svg>
      <span className="relative">{label}</span>
    </a>
  );
}

const aMan = <path d="M8 0l2 7 5 5v3l-5-3-2 4-2-4-5 3v-3l5-5z" fill={W} stroke="none" />;

function StatusBar() {
  return (
    <footer className="flex h-[28px] border-t border-[#444c57] bg-[#222831]">
      <div className="flex flex-1">
        <div className="flex pl-2">
          <LayoutTab label="Model" active w="w-16" />
          <LayoutTab label="Layout1" w="w-[60px]" />
          <LayoutTab label="Layout2" w="w-[70px]" />
        </div>
        <button type="button" aria-label="New layout" className="ml-[2px] flex h-4 w-[22px] items-center justify-center rounded-tl-lg rounded-br-lg bg-[#343c49]">
          <svg width="8" height="8" viewBox="0 0 8 8" stroke="#b2b5ba" strokeWidth="2" aria-hidden="true"><path d="M4 0v8M0 4h8" /></svg>
        </button>
      </div>
      <div className="flex shrink-0 pt-px text-white">
        <Group w="w-[47px]">MODEL</Group>
        <Group w="w-16" gap="ml-[3px]">
          <Cell w="w-[22px]" on><Icon><path d="M3.500 0v16M8 0v16M12.500 0v16M0 3.500h16M0 8h16M0 12.500h16" stroke="#fff" strokeWidth="1.200" /></Icon></Cell>
          <Cell w="w-[26px]"><Icon><path d="M2 3h12M2 8h12M2 13h12" strokeWidth="2" strokeDasharray="2 3" /></Icon></Cell>
          <Cell w="w-[14px]"><Caret big /></Cell>
        </Group>
        <Group w="w-6" gap="ml-[3px]"><Icon><path d="M9.500 1.500h6v5h-6zM9.500 6v5" /><path d="M1 11h8v5H1z" fill={W} stroke="none" /></Icon></Group>
        <Group w="w-6"><Cell w="w-[22px]" on><Icon><path d="M4 1v6M1 4h6" stroke="#fff" /><path d="M7 11h9v4H7z" fill="#fff" stroke="none" /><path d="M4 10h2v5H4z" fill="#fff" stroke="none" /></Icon></Cell></Group>
        <Group w="w-[104px]">
          <Cell w="w-6"><Icon><path d="M.5 0v15.500H16M.5 10.500h5v5" /></Icon></Cell>
          <Cell w="w-6"><Icon><circle cx="7" cy="9" r="6.500" /><path d="M7 9h9M7 9l6-8M12 7v4" /></Icon></Cell>
          <Cell w="w-4"><Caret big /></Cell>
          <Cell w="w-6"><Icon><path d="M2 2l12 12" stroke={O} /><path d="M8 0v16" stroke={G} /><path d="M7 7h2v2H7z" fill={W} /></Icon></Cell>
          <Cell w="w-4"><Caret big /></Cell>
        </Group>
        <Group w="w-6"><Cell w="w-[22px]" on><Icon><path d="M0 14.500h16M1 14L12 2" stroke="#fff" /><path d="M6 7h3v3H6z" fill="#fff" stroke="none" /></Icon></Cell></Group>
        <Group w="w-[39px]"><Cell w="w-[22px]" on><Icon><path d="M5 3.500h10.500v12h-13V6M.5.500h4v4h-4z" stroke="#fff" /></Icon></Cell><Cell w="w-4"><Caret big /></Cell></Group>
        <Group w="w-6"><Icon><path d="M0 1.500h16M0 5.500h7M9 5.500h7" /><path d="M0 10h7M9 10h7M0 14h16" strokeWidth="2" /></Icon></Group>
        <Group w="w-6"><Cell w="w-[22px]" on><Icon><path d="M.5.500h15v15H.5z" stroke="#fff" /><path d="M2 3.500h12M2 9.500h12" stroke="#fff" strokeWidth="3" strokeDasharray="3 3" /><path d="M5 6.500h9M5 12.500h9" stroke="#fff" strokeWidth="3" strokeDasharray="3 3" /></Icon></Cell></Group>
        <Group w="w-6"><Icon><path d="M2.500 0v5M0 2.500h5M5 4.500h11M5.500 4v11" /><path d="M6 6h10v10H6z" fill={G} stroke="none" /></Icon></Group>
        <Group w="w-10"><Cell w="w-6"><Icon><path d="M4 10V4l4-3.500h7.500V8L11 12H6M4 4h7v8M11 4l4-3" /><path d="M.5 11.500h4v4h-4z" stroke="#f0a865" /></Icon></Cell><Cell w="w-4"><Caret big /></Cell></Group>
        <Group w="w-[104px]" gap="ml-[3px]">
          <Cell w="w-[22px]" on><Icon><path d="M2.500 1v13H15" stroke="#fff" /><path d="M2.500 0L5 4H0zM16 13.500l-4-2.500v5zM11 0l-5 6h3l-2 5 6-6h-3z" fill="#fff" stroke="none" /></Icon></Cell>
          <Cell w="w-[26px]"><Icon><path d="M2 5l3-4h10.500v9L13 13M2.500 5v9h10V5z" strokeDasharray="3 1" /><path d="M1 3h3v3H1zM11 3h3v3h-3zM1 13h3v3H1zM11 13h3v3h-3z" fill={B} stroke="none" /></Icon></Cell>
          <Cell w="w-4"><Caret big /></Cell>
          <Cell w="w-[22px]" on><Icon><path d="M8 1L2 5v7l6 3 6-3V5zM8 1v8L1 14M8 9l7 5" stroke="#fff" /><circle cx="8" cy="2" r="1.500" fill="#fff" /><circle cx="2" cy="13" r="1.500" fill="#fff" /><circle cx="14" cy="13" r="1.500" fill="#fff" /></Icon></Cell>
          <Cell w="w-4"><Caret big /></Cell>
        </Group>
        <Group w="w-[106px]" gap="ml-[3px]">
          <Cell w="w-[22px]" on><Icon>{aMan}<circle cx="13" cy="3" r="2.500" stroke="#fff" /></Icon></Cell>
          <Cell w="w-6"><Icon>{aMan}<path d="M13 0l-3 4h3l-2 3 5-4h-3z" fill={W} stroke="none" /></Icon></Cell>
          <Cell w="w-6"><Icon><path d="M8 0l2 7 5 8-5-3-2 3-2-3-5 3 5-8z" fill={W} stroke="none" /></Icon></Cell>
          <Cell w="w-[34px]"><span className="mr-1">1:1</span><Caret big /></Cell>
        </Group>
        <Group w="w-10" gap="ml-[3px]">
          <Cell w="w-6"><Icon><circle cx="8" cy="8" r="4.500" strokeWidth="3" /><circle cx="8" cy="8" r="6.800" strokeWidth="2.400" strokeDasharray="2.700 2.640" /></Icon></Cell>
          <Cell w="w-4"><Caret big /></Cell>
        </Group>
        <Group w="w-6"><Icon><path d="M8 0v16M0 8h16" strokeWidth="1.800" /></Icon></Group>
        <Group w="w-[97px]" gap="ml-[3px]">
          <Cell w="w-6"><Icon><path d="M4 0h8v2H9v1h3v1H8v1h4v1H9v1h3v2H8v1h4v1H9v1h3v4H4z" fill={W} stroke="none" /></Icon></Cell>
          <Cell w="w-[52px]">Decimal</Cell>
          <Cell w="w-4"><Caret big /></Cell>
        </Group>
        <Group w="w-6"><Icon><path d="M2.500.500h11v15h-11zM3 3.500h10M5 6.500h1M5 9.500h1M5 12.500h1M8 6.500h4M8 9.500h4M8 12.500h4" /></Icon></Group>
        <Group w="w-10" gap="ml-[3px]">
          <Cell w="w-6"><Icon><path d="M6 13.500H.5V.5h13V6M.5 3h13" /><path d="M7 10h7v6H7z" fill={W} stroke="none" /><path d="M12.500 10V8a1.500 1.500 0 0 1 3 0v1" /></Icon></Cell>
          <Cell w="w-4"><Caret big /></Cell>
        </Group>
        <Group w="w-6"><Icon><path d="M.5.500h6v6h-6zM6.500 10l4 5.500h-8z" /><circle cx="12.500" cy="7" r="3" /></Icon></Group>
        <Group w="w-6" gap="ml-[3px]"><Cell w="w-[22px]" on><Icon><circle cx="8" cy="8" r="7.500" fill="#a9cbea" stroke="#e8e8e8" /><path d="M3 6l6-4M4 9l8-5M5 12l8-7" stroke="#fff" /><path d="M7 14l2-5 4-3-1 4z" fill="#fff" stroke="none" /></Icon></Cell></Group>
        <Group w="w-[49px]" gap="ml-[3px]">
          <Cell w="w-6"><Icon><path d="M.5 2.500h15v11H.5z" /><path d="M10 4h4v4zM2 12V8l4 4z" fill={W} stroke="none" /><path d="M4 10l1.500-1.500M11 7l-1.500 1.500" /></Icon></Cell>
          <Cell w="w-6"><Icon><path d="M0 2h16M0 8h16M0 14h16" strokeWidth="2" /></Icon></Cell>
        </Group>
      </div>
    </footer>
  );
}

export default function App() {
  return (
    <div className="flex min-h-screen flex-col overflow-hidden bg-[#222831] font-['Open_Sans',sans-serif] text-xs text-[#e6e8ea]">
      <TitleBar />
      <MenuTabs />
      <Ribbon />
      <FileTabs />
      <Canvas />
      <StatusBar />
    </div>
  );
}
